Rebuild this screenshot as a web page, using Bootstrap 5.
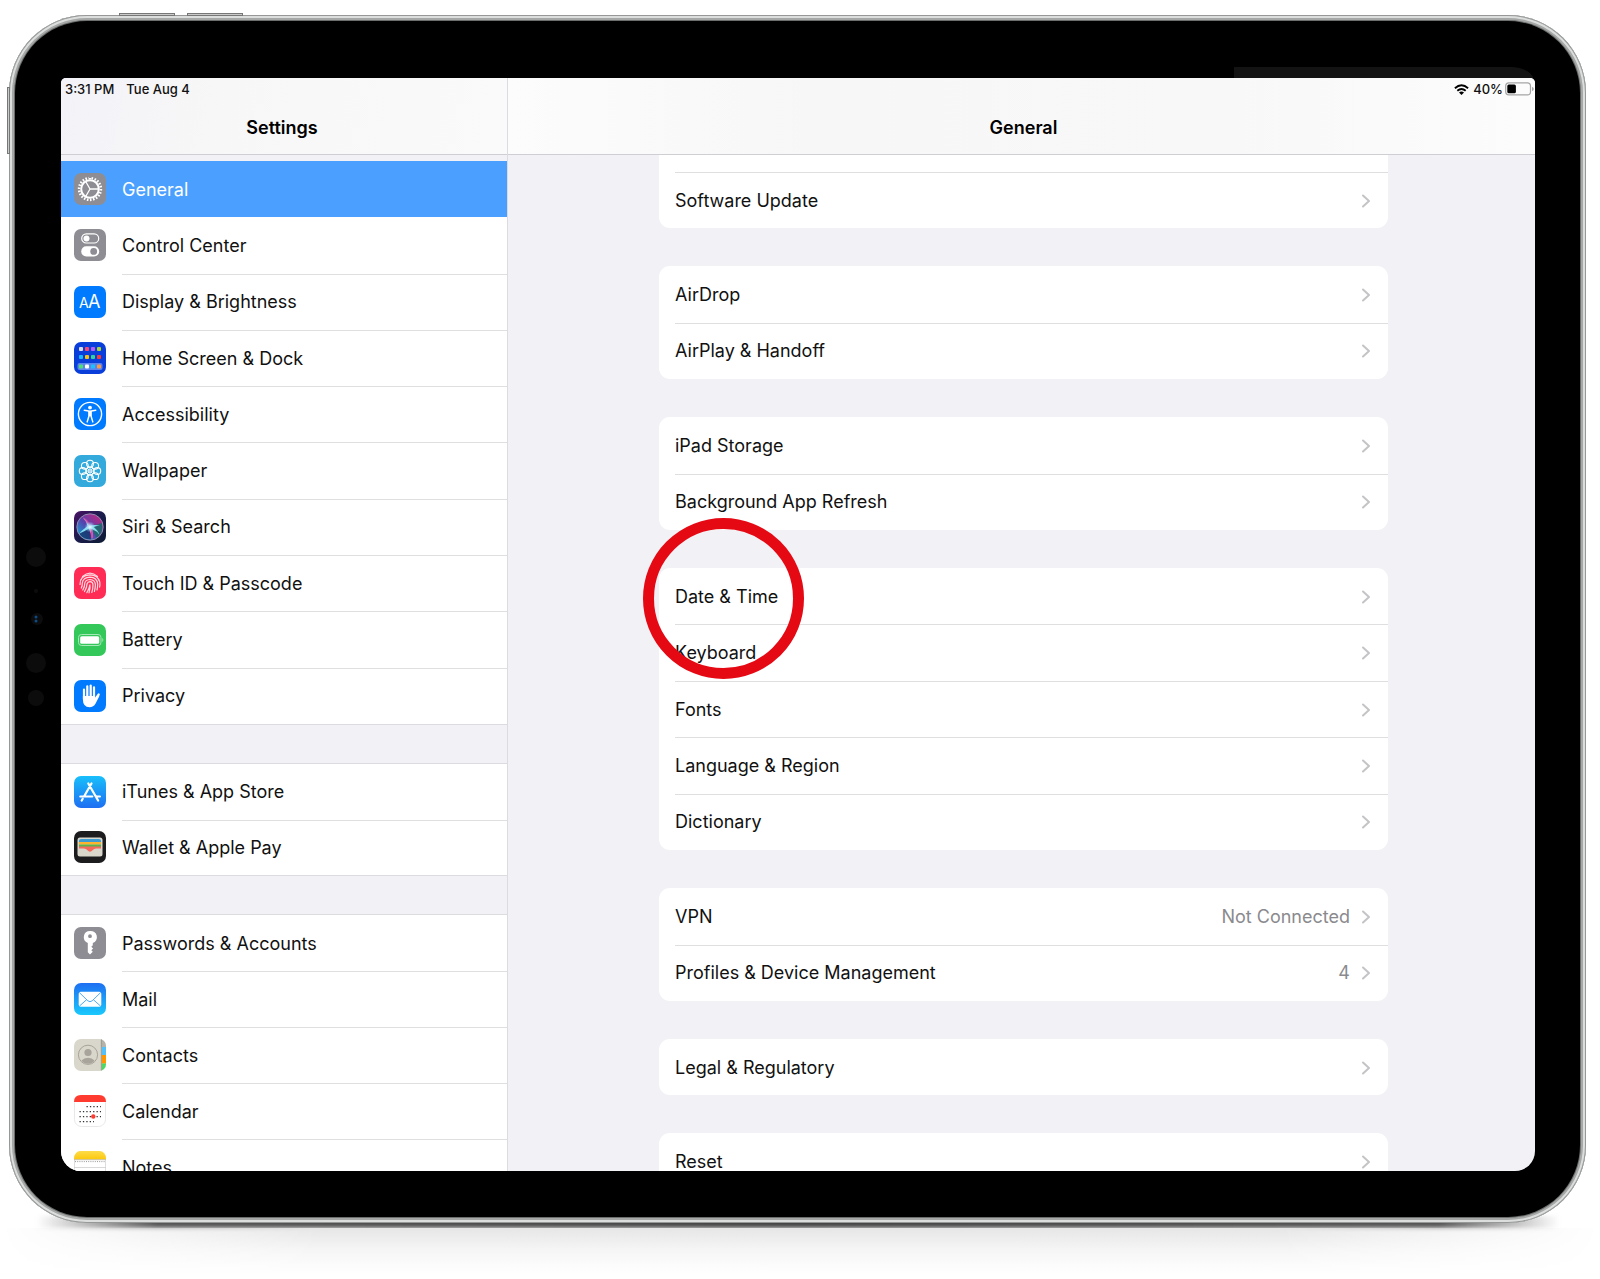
<!DOCTYPE html>
<html lang="en">
<head>
<meta charset="utf-8">
<meta name="viewport" content="width=device-width, initial-scale=1">
<title>Settings – General</title>
<link href="https://cdn.jsdelivr.net/npm/bootstrap@5.3.0/dist/css/bootstrap.min.css" rel="stylesheet">
<style>
  body { font-family: Inter, "Liberation Sans", sans-serif; font-size: 18px; line-height: 24px; color: #111; background: #fff; overflow-x: hidden; }

  /* Tablet hardware */
  .tablet { margin: 15px 14px 0 9px; padding: 6px; border-radius: 78px; background: #6c6e6e;
    box-shadow: inset 0 0 0 1px #969898, inset 0 0 0 3px #dcdedd, inset 0 0 0 5px #a6a8a8; z-index: 1; }
  .bezel { padding: 57px 45px 46px 46px; border-radius: 72px; background: #000; }
  .side-key { position: absolute; background: #c9cbca; border: 1px solid #777; }
  .key-a { top: -2px; left: 110px; width: 56px; height: 3px; }
  .key-b { top: -2px; left: 178px; width: 56px; height: 3px; }
  .key-c { top: 72px; left: -2px; width: 3px; height: 67px; }
  .sensors { position: absolute; left: 10px; top: 525px; width: 24px; }
  .glare { position: absolute; top: 46px; right: 46px; width: 300px; height: 14px; background: #131313; border-top-right-radius: 24px 14px; }
  .floor-line { height: 12px; margin: -7px 40px 0 36px; filter: blur(2px);
    background: linear-gradient(90deg, transparent, #555 8%, #444 50%, #555 92%, transparent); }
  .floor-haze { height: 46px;
    background: linear-gradient(180deg, #e6e6e6, #f6f6f6 50%, #fff);
    -webkit-mask-image: linear-gradient(90deg, transparent, #000 20%, #000 80%, transparent);
    mask-image: linear-gradient(90deg, transparent, #000 20%, #000 80%, transparent); }

  /* Screen */
  .screen { aspect-ratio: 1474 / 1093; border-radius: 5px 5px 20px 20px; background: #f2f1f6; }
  .pane-side { flex: 0 0 447px; border-right: 1px solid #dcdbe0; }
  .bar-top { height: 77px; border-bottom: 1px solid #cfced3; background: #fafafa; }
  .pane-side .bar-top { background: linear-gradient(100deg, #f3f2f8, #f7f7f7 35%, #fafafa); }
  .pane-main .bar-top { background: linear-gradient(90deg, #fcfcfc, #f7f7f7 30%, #f8f8f8 70%, #fcfcfc); }
  .status { height: 22px; font-size: 13px; line-height: 22px; font-weight: 500; padding: 0 4px; }
  .status-right { padding: 0 1px 0 0; gap: 2px; }
  .status-right svg:first-child { margin-right: 2px; }
  .bar-title { font-size: 18px; line-height: 24px; font-weight: 600; margin: 16px 0 0; color: #000; }
  .pane-side .bar-title { padding-right: 4px; }
  .pane-main .bar-title { padding-left: 4px; }

  /* Lists */
  .rows-1 { height: 56px; } .rows-2 { height: 113px; } .rows-5 { height: 282px; } .rows-10 { height: 564px; }
  .set-list { border-radius: 0; background: #fff; flex: none; }
  .set-item { display: flex; flex: 1 1 0; padding: 0; border: 0; background: transparent; color: #111; }
  .set-item:hover, .set-item:focus { background: transparent; color: #111; }
  .set-label { display: flex; flex: 1; align-items: center; border-top: 1px solid transparent; }
  .set-item + .set-item .set-label { border-top-color: #dfdfe2; }

  .side-body { padding-top: 6px; gap: 38px; }
  .side-body .set-list { border: solid #dcdbe0; border-width: 1px 0; }
  .side-body .set-list:first-child { border-top: 0; }
  .side-body .set-item { padding-left: 13px; gap: 16px; }
  .side-body .set-item.active { background: #4ba0ff; color: #fff; margin: 0; }
  .side-body .active + .set-item .set-label { border-top-color: transparent; }
  .app-icon { width: 32px; height: 32px; flex: none; align-self: center; }

  .main-body { padding: 0 147px 0 151px; gap: 38px; }
  .main-body .set-list { border-radius: 11px; }
  .main-body .set-item { padding-left: 16px; }
  .main-body .set-label { padding-right: 17px; }
  .list-cut { height: 73px; border-radius: 0 0 11px 11px !important; }
  .list-cut .set-item:first-child { flex: 0 0 17px; }
  .chev { width: 10px; height: 16px; margin-left: 11px; }
  .set-value { color: #8a8a8e; }
  .ring-mark { position: absolute; left: -16px; top: -50px; width: 161px; height: 161px; border: 11px solid #e50914; border-radius: 50%; z-index: 5; pointer-events: none; }
</style>
<script src="https://cdn.jsdelivr.net/npm/bootstrap@5.3.0/dist/js/bootstrap.bundle.min.js"></script>
</head>
<body>
<svg width="0" height="0" class="position-absolute" aria-hidden="true">
  <defs>
    <linearGradient id="gStore" x2="0" y2="1"><stop stop-color="#18bffb"/><stop offset="1" stop-color="#1e6ff2"/></linearGradient>
    <linearGradient id="gMail" x2="0" y2="1"><stop stop-color="#1e6ff2"/><stop offset="1" stop-color="#19c9fc"/></linearGradient>
    <linearGradient id="gNote" x2="0" y2="1"><stop stop-color="#fddc4a"/><stop offset="1" stop-color="#fcc70c"/></linearGradient>
    <linearGradient id="gSiri" x2="1" y2="1"><stop stop-color="#4a1166"/><stop offset=".5" stop-color="#1a1c4c"/><stop offset="1" stop-color="#0d1b33"/></linearGradient>
    <linearGradient id="gOrb" x1=".1" y1=".8" x2=".8" y2=".1"><stop stop-color="#1aa7dd"/><stop offset=".45" stop-color="#5b47b8"/><stop offset="1" stop-color="#c32a8c"/></linearGradient>
    <radialGradient id="gGlow"><stop stop-color="#fff"/><stop offset=".35" stop-color="#bfefff" stop-opacity=".75"/><stop offset="1" stop-color="#7fd8ff" stop-opacity="0"/></radialGradient>
    <clipPath id="tile"><rect width="32" height="32" rx="7"/></clipPath>
    <symbol id="chevron" viewBox="0 0 10 16"><path d="M2 2.500l6 5.500-6 5.500" fill="none" stroke="#c4c4c7" stroke-width="2" stroke-linecap="round" stroke-linejoin="round"/></symbol>
  </defs>
</svg>

<div class="tablet position-relative">
  <span class="side-key key-a"></span><span class="side-key key-b"></span><span class="side-key key-c"></span>
  <div class="bezel position-relative">
    <span class="glare"></span>
    <svg class="sensors" viewBox="0 0 24 168" height="168" aria-hidden="true">
      <g fill="#0c0c0c"><circle cx="11" cy="11" r="10"/><circle cx="11" cy="45" r="2"/><circle cx="12" cy="73" r="6"/><circle cx="11" cy="117" r="10"/><circle cx="11" cy="152" r="8"/></g>
      <g fill="#0e4a86"><circle cx="11" cy="71" r="1.500"/><circle cx="11" cy="75" r="1.500"/></g>
    </svg>

    <div class="screen d-flex overflow-hidden position-relative">
      <nav class="pane-side d-flex flex-column overflow-hidden" aria-label="Settings sections">
        <header class="bar-top flex-shrink-0">
          <div class="status d-flex gap-2"><span class="me-1">3:31 PM</span><span>Tue Aug 4</span></div>
          <h1 class="bar-title text-center">Settings</h1>
        </header>
        <div class="side-body d-flex flex-column overflow-hidden flex-fill">
          <div class="list-group set-list rows-10">
            <a href="#general" class="list-group-item set-item active" aria-current="true">
              <svg class="app-icon" viewBox="0 0 32 32"><rect width="32" height="32" rx="7" fill="#8e8d93"/><g fill="none" stroke="#fff"><circle cx="16" cy="16" r="8.800" stroke-width="2"/><circle cx="16" cy="16" r="10.900" stroke-width="2.600" pathLength="44" stroke-dasharray="1 1"/><path d="M16 16h8.500M16 16l-4.300-7.500M16 16l-4.300 7.500" stroke-width="1.300"/></g></svg>
              <span class="set-label">General</span></a>
            <a href="#control" class="list-group-item set-item">
              <svg class="app-icon" viewBox="0 0 32 32"><rect width="32" height="32" rx="7" fill="#8e8d93"/><rect x="7.700" y="4.800" width="17" height="9.200" rx="4.600" fill="none" stroke="#fff" stroke-width="1.200"/><circle cx="12.500" cy="9.400" r="3" fill="#fff"/><rect x="7.200" y="17.300" width="18" height="10.200" rx="5.100" fill="#fff"/><circle cx="19.700" cy="22.400" r="3.400" fill="#8e8d93"/></svg>
              <span class="set-label">Control Center</span></a>
            <a href="#display" class="list-group-item set-item">
              <svg class="app-icon" viewBox="0 0 32 32"><rect width="32" height="32" rx="7" fill="#007aff"/><g fill="#fff" font-family="Inter, sans-serif"><text x="5" y="22" font-size="14">A</text><text x="14" y="22" font-size="18">A</text></g></svg>
              <span class="set-label">Display &amp; Brightness</span></a>
            <a href="#home" class="list-group-item set-item">
              <svg class="app-icon" viewBox="0 0 32 32"><rect width="32" height="32" rx="7" fill="#0a3edb"/><rect x="3.500" y="21" width="25" height="7" rx="2" fill="#5d83ee"/><g><rect x="5" y="5" width="4" height="4" rx="1" fill="#dcdcdc"/><rect x="11" y="5" width="4" height="4" rx="1" fill="#ff4670"/><rect x="17" y="5" width="4" height="4" rx="1" fill="#b85cf6"/><rect x="23" y="5" width="4" height="4" rx="1" fill="#a9d63a"/><rect x="5" y="13" width="4" height="4" rx="1" fill="#19b9fb"/><rect x="11" y="13" width="4" height="4" rx="1" fill="#fdc10d"/><rect x="17" y="13" width="4" height="4" rx="1" fill="#30d59a"/><rect x="23" y="13" width="4" height="4" rx="1" fill="#fb3a34"/><rect x="5" y="22.500" width="4" height="4" rx="1" fill="#4be36a"/><rect x="11" y="22.500" width="4" height="4" rx="1" fill="#fff"/><rect x="17" y="22.500" width="4" height="4" rx="1" fill="#19c2fb"/><rect x="23" y="22.500" width="4" height="4" rx="1" fill="#ff9a3d"/></g></svg>
              <span class="set-label">Home Screen &amp; Dock</span></a>
            <a href="#access" class="list-group-item set-item">
              <svg class="app-icon" viewBox="0 0 32 32"><rect width="32" height="32" rx="7" fill="#007aff"/><circle cx="16" cy="16" r="11.600" fill="none" stroke="#fff" stroke-width="1.400"/><circle cx="16" cy="9.600" r="1.900" fill="#fff"/><path d="M10.300 12.300l5.700.9 5.700-.9M16 13.500v4M14.900 13.800v4.500l-1.700 5.600M17.100 13.800v4.500l1.700 5.600" fill="none" stroke="#fff" stroke-width="1.500" stroke-linecap="round" stroke-linejoin="round"/></svg>
              <span class="set-label">Accessibility</span></a>
            <a href="#wall" class="list-group-item set-item">
              <svg class="app-icon" viewBox="0 0 32 32"><rect width="32" height="32" rx="7" fill="#34aadc"/><g fill="none" stroke="#fff" stroke-width="1.100"><circle cx="16" cy="8.700" r="3.400"/><circle cx="16" cy="23.300" r="3.400"/><circle cx="8.700" cy="16" r="3.400"/><circle cx="23.300" cy="16" r="3.400"/><circle cx="10.850" cy="10.850" r="3.400"/><circle cx="21.150" cy="10.850" r="3.400"/><circle cx="10.850" cy="21.150" r="3.400"/><circle cx="21.150" cy="21.150" r="3.400"/><circle cx="16" cy="16" r="4"/><circle cx="16" cy="16" r="1.300"/><path d="M16 12v2.500M16 17.500V20M12 16h2.500M17.500 16H20M13.200 13.200l1.800 1.800M17 17l1.800 1.800M18.800 13.200L17 15M15 17l-1.800 1.800" stroke-width=".8"/></g></svg>
              <span class="set-label">Wallpaper</span></a>
            <a href="#siri" class="list-group-item set-item">
              <svg class="app-icon" viewBox="0 0 32 32"><rect width="32" height="32" rx="7" fill="url(#gSiri)"/><circle cx="16" cy="16" r="13" fill="url(#gOrb)" opacity=".9"/><path d="M16 16l12-4q2 9-5 15z" fill="#1b6a6e" opacity=".9"/><path d="M16 16L5 22q2 6 12 6.500z" fill="#12275c" opacity=".7"/><path d="M16 14.500Q13 9 9 6.500q3.500 4 4.500 8.500Q9 18.500 4.500 23q6-2.500 10.500-5.500 2 5 3.500 10 .5-5-.5-9.500 5 2 7.500 6-1.500-5-6-8 3.500-1.500 6.500-1.500-5-1-10 0z" fill="#8eeaf7" opacity=".9"/><path d="M16 17.500l1.500 10.500 1.500-1-.800-9z" fill="#f13da0"/><path d="M16 16L9 6.500q6 2 7.500 8.500z" fill="#ea3d9c" opacity=".7"/><circle cx="16" cy="16" r="5.500" fill="url(#gGlow)"/><circle cx="16" cy="16" r="13.200" fill="none" stroke="#a8a4c4" stroke-width=".8"/></svg>
              <span class="set-label">Siri &amp; Search</span></a>
            <a href="#touch" class="list-group-item set-item">
              <svg class="app-icon" viewBox="0 0 32 32"><rect width="32" height="32" rx="7" fill="#ff2d55"/><g fill="none" stroke="#ffd9e0" stroke-width="1.200" stroke-linecap="round"><path d="M8.500 9.500Q16 2.800 23.500 9.500"/><path d="M6 17.500Q5.800 8.400 16 7.900q8 .3 9.800 7.300.4 3-.2 5"/><path d="M7.300 21Q8.500 18.500 8.300 16 9 10.500 16 10.200q7 .3 7.700 6.800 0 3-.7 6"/><path d="M8.800 23Q10.900 19.500 10.700 16.500 11.200 12.800 16 12.500q5 .3 5.400 5-.100 4-1 7"/><path d="M10.500 24.500Q13 20.500 13 17q.500-2.200 3-2.300 2.900.2 3 3 0 4-1.200 7.800"/><path d="M12.800 25.700Q15.500 21.500 15.900 17.500q.700 3-.9 8.300"/></g></svg>
              <span class="set-label">Touch ID &amp; Passcode</span></a>
            <a href="#battery" class="list-group-item set-item">
              <svg class="app-icon" viewBox="0 0 32 32"><rect width="32" height="32" rx="7" fill="#34c759"/><rect x="4.500" y="10.500" width="22.500" height="11" rx="3" fill="none" stroke="#a6e8b7"/><rect x="6.200" y="12.200" width="19" height="7.600" rx="1.500" fill="#fff"/><path d="M28.300 14v4q1-.6 1-2t-1-2z" fill="#a6e8b7"/></svg>
              <span class="set-label">Battery</span></a>
            <a href="#privacy" class="list-group-item set-item">
              <svg class="app-icon" viewBox="0 0 32 32"><rect width="32" height="32" rx="7" fill="#007aff"/><g fill="none" stroke="#fff" stroke-width="2.200" stroke-linecap="round"><path d="M10 9.500V19M13.300 6.300V18M16.700 5.500V18M20 7.300V18"/><path d="M20.500 20.500l4.200-6"/></g><path d="M8.900 16h12.200v3.500l3.500-4 .8.500-3.800 7.500Q19.500 27.300 15.500 27.300 8.900 27 8.900 19.500z" fill="#fff"/></svg>
              <span class="set-label">Privacy</span></a>
          </div>
          <div class="list-group set-list rows-2">
            <a href="#store" class="list-group-item set-item">
              <svg class="app-icon" viewBox="0 0 32 32"><rect width="32" height="32" rx="7" fill="url(#gStore)"/><g fill="none" stroke="#fff" stroke-width="2.200" stroke-linecap="round"><path d="M17.500 7.500L10.300 20M14.300 7.500l9.800 17M6.300 20.500h12M22.500 20.500h3.400M8.700 22.800l-1 1.700"/></g></svg>
              <span class="set-label">iTunes &amp; App Store</span></a>
            <a href="#wallet" class="list-group-item set-item">
              <svg class="app-icon" viewBox="0 0 32 32"><rect width="32" height="32" rx="7" fill="#1c1c1e"/><rect x="3.500" y="6.500" width="25" height="19" rx="2.500" fill="#d9d6cb"/><path d="M5 10q0-2 2-2h18q2 0 2 2v1.500H5z" fill="#3d9bd1"/><path d="M5 11h22v2.500H5z" fill="#fdb32b"/><path d="M5 13.500h22V16H5z" fill="#5bb54a"/><path d="M5 15.500h22V18h-5q-2 0-3 1.300Q16 23 13 19.300 12 18 10 18H5z" fill="#f4695e"/><path d="M5 17.500h5q2 0 3 1.500 3 3.500 6 0 1-1.500 3-1.500h5V23q0 1.500-1.500 1.500h-19Q5 24.500 5 23z" fill="#d9d6cb"/></svg>
              <span class="set-label">Wallet &amp; Apple Pay</span></a>
          </div>
          <div class="list-group set-list rows-5">
            <a href="#passwords" class="list-group-item set-item">
              <svg class="app-icon" viewBox="0 0 32 32"><rect width="32" height="32" rx="7" fill="#8e8d93"/><path d="M16 4a6.200 6.200 0 0 0-2.200 12v9.300l2.200 2.200 2.800-2.700-1.500-1.500 1.800-1.800-1.800-1.800 1.500-1.500V16A6.200 6.200 0 0 0 16 4zm0 3.300a1.900 1.900 0 1 1 0 3.800 1.900 1.900 0 0 1 0-3.800z" fill="#fff" fill-rule="evenodd"/></svg>
              <span class="set-label">Passwords &amp; Accounts</span></a>
            <a href="#mail" class="list-group-item set-item">
              <svg class="app-icon" viewBox="0 0 32 32"><rect width="32" height="32" rx="7" fill="url(#gMail)"/><rect x="4.700" y="8.700" width="22.600" height="15" rx="2" fill="#fff"/><path d="M5.300 9.500l8.500 8.300q2.200 1.800 4.400 0l8.500-8.300M5.500 23l7.300-6.500M26.500 23l-7.300-6.500" fill="none" stroke="#3e9ff5" stroke-width=".9"/></svg>
              <span class="set-label">Mail</span></a>
            <a href="#contacts" class="list-group-item set-item">
              <svg class="app-icon" viewBox="0 0 32 32"><g clip-path="url(#tile)"><rect width="32" height="32" fill="#d9d6cb"/><path d="M27 0h5v8h-5z" fill="#b5b2a9"/><path d="M27.500 8h5v8h-5z" fill="#54c1f8"/><path d="M27.500 16h5v8.500h-5z" fill="#ff9500"/><path d="M27.500 24.500h5V32h-5z" fill="#4cd964"/><path d="M27.300 0v32" stroke="#8f8c84" stroke-width=".7"/></g><circle cx="14" cy="15.800" r="9.600" fill="none" stroke="#a8a39b" stroke-width="1"/><circle cx="14" cy="13.500" r="3.600" fill="#a8a39b"/><path d="M7.500 21.500q2.500-2.700 6.500-2.700t6.500 2.700Q18 24.800 14 24.800t-6.500-3.300z" fill="#a8a39b"/></svg>
              <span class="set-label">Contacts</span></a>
            <a href="#calendar" class="list-group-item set-item">
              <svg class="app-icon" viewBox="0 0 32 32"><rect x=".500" y=".500" width="31" height="31" rx="7" fill="#fff" stroke="#e8e8e8"/><path d="M0 7q0-7 7-7h18q7 0 7 7z" fill="#ff3b30"/><path d="M12.500 11.600H27M5.500 16.600H27M5.500 21.600H27M5.500 26.600H20" stroke="#333" stroke-width="1.200" stroke-dasharray="1.300 2.100"/><circle cx="19.300" cy="21.500" r="2.200" fill="#ff3b30"/></svg>
              <span class="set-label">Calendar</span></a>
            <a href="#notes" class="list-group-item set-item">
              <svg class="app-icon" viewBox="0 0 32 32"><rect x=".500" y=".500" width="31" height="31" rx="7" fill="#fff" stroke="#dedede"/><path d="M0 8.500Q0 0 7 0h18q7 0 7 8.500z" fill="url(#gNote)"/><path d="M0 8.700h32" stroke="#b9b6ac" stroke-width=".8"/><path d="M1 10.600h30" stroke="#999" stroke-dasharray="1 1.200"/><path d="M0 16.500h32M0 23.500h32" stroke="#cfcfcf" stroke-width=".8"/></svg>
              <span class="set-label">Notes</span></a>
          </div>
        </div>
      </nav>

      <main class="pane-main d-flex flex-column flex-fill overflow-hidden">
        <header class="bar-top flex-shrink-0">
          <div class="status status-right d-flex justify-content-end align-items-center">
            <svg width="15" height="11" viewBox="0 0 15 11" aria-label="Wi-Fi"><g fill="none" stroke="#000" stroke-width="1.900"><path d="M.9 4.200q6.600-5.700 13.200 0"/><path d="M3.300 6.700q4.200-3.500 8.400 0"/></g><path d="M7.500 11L5 8.400q2.500-1.900 5 0z"/></svg>
            <span>40%</span>
            <svg width="29" height="14" viewBox="0 0 29 14" aria-label="Battery"><rect x=".700" y=".900" width="24.800" height="12" rx="3.200" fill="none" stroke="#a5a5a5" stroke-width="1.200"/><rect x="2.300" y="2.500" width="8.600" height="8.800" rx="1.500"/><path d="M27 4.800v4.400q1.800-.8 1.800-2.200T27 4.800z" fill="#a5a5a5"/></svg>
          </div>
          <h2 class="bar-title text-center">General</h2>
        </header>
        <div class="main-body d-flex flex-column overflow-hidden flex-fill">
          <div class="list-group set-list list-cut">
            <div class="set-item"></div>
            <a href="#update" class="list-group-item set-item"><span class="set-label">Software Update<svg class="chev ms-auto"><use href="#chevron"/></svg></span></a>
          </div>
          <div class="list-group set-list rows-2">
            <a href="#airdrop" class="list-group-item set-item"><span class="set-label">AirDrop<svg class="chev ms-auto"><use href="#chevron"/></svg></span></a>
            <a href="#airplay" class="list-group-item set-item"><span class="set-label">AirPlay &amp; Handoff<svg class="chev ms-auto"><use href="#chevron"/></svg></span></a>
          </div>
          <div class="list-group set-list rows-2">
            <a href="#storage" class="list-group-item set-item"><span class="set-label">iPad Storage<svg class="chev ms-auto"><use href="#chevron"/></svg></span></a>
            <a href="#refresh" class="list-group-item set-item"><span class="set-label">Background App Refresh<svg class="chev ms-auto"><use href="#chevron"/></svg></span></a>
          </div>
          <div class="list-group set-list rows-5 position-relative">
            <span class="ring-mark"></span>
            <a href="#date" class="list-group-item set-item"><span class="set-label">Date &amp; Time<svg class="chev ms-auto"><use href="#chevron"/></svg></span></a>
            <a href="#keyboard" class="list-group-item set-item"><span class="set-label">Keyboard<svg class="chev ms-auto"><use href="#chevron"/></svg></span></a>
            <a href="#fonts" class="list-group-item set-item"><span class="set-label">Fonts<svg class="chev ms-auto"><use href="#chevron"/></svg></span></a>
            <a href="#language" class="list-group-item set-item"><span class="set-label">Language &amp; Region<svg class="chev ms-auto"><use href="#chevron"/></svg></span></a>
            <a href="#dictionary" class="list-group-item set-item"><span class="set-label">Dictionary<svg class="chev ms-auto"><use href="#chevron"/></svg></span></a>
          </div>
          <div class="list-group set-list rows-2">
            <a href="#vpn" class="list-group-item set-item"><span class="set-label">VPN<span class="set-value ms-auto">Not Connected</span><svg class="chev"><use href="#chevron"/></svg></span></a>
            <a href="#profiles" class="list-group-item set-item"><span class="set-label">Profiles &amp; Device Management<span class="set-value ms-auto">4</span><svg class="chev"><use href="#chevron"/></svg></span></a>
          </div>
          <div class="list-group set-list rows-1">
            <a href="#legal" class="list-group-item set-item"><span class="set-label">Legal &amp; Regulatory<svg class="chev ms-auto"><use href="#chevron"/></svg></span></a>
          </div>
          <div class="list-group set-list rows-1">
            <a href="#reset" class="list-group-item set-item"><span class="set-label">Reset<svg class="chev ms-auto"><use href="#chevron"/></svg></span></a>
          </div>
        </div>
      </main>
    </div>
  </div>
</div>
<div class="floor-line"></div>
<div class="floor-haze"></div>
</body>
</html>
